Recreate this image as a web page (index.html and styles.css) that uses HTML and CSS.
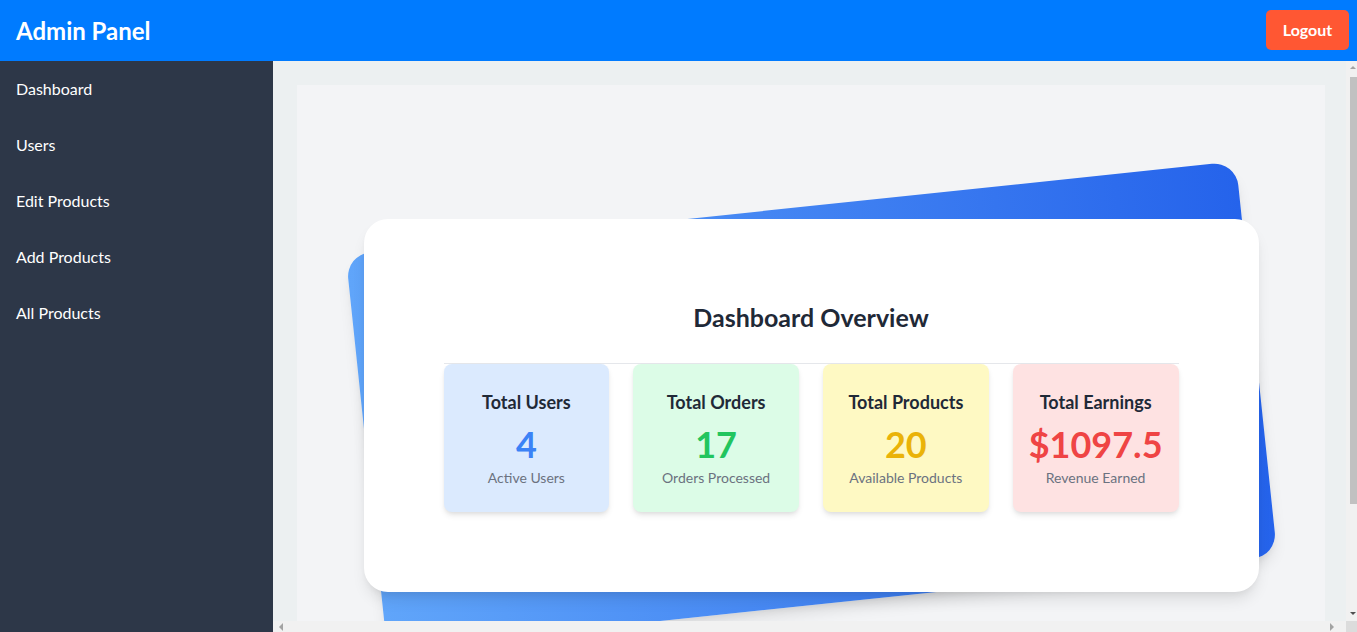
FILE: index.html
```html
<!DOCTYPE html>
<html lang="en">
<head>
<meta charset="utf-8">
<title>Admin Panel</title>
<link rel="stylesheet" href="styles.css">
</head>
<body>
<header class="topbar">
  <h1 class="brand">Admin Panel</h1>
  <button class="logout">Logout</button>
</header>
<div class="layout">
  <nav class="sidebar">
    <a class="nav-item" href="#">Dashboard</a>
    <a class="nav-item" href="#">Users</a>
    <a class="nav-item" href="#">Edit Products</a>
    <a class="nav-item" href="#">Add Products</a>
    <a class="nav-item" href="#">All Products</a>
  </nav>
  <main class="main">
    <div class="viewport">
      <div class="stage">
        <div class="card-wrap">
          <div class="card-back"></div>
          <section class="card">
            <h2 class="card-title">Dashboard Overview</h2>
            <hr class="divider">
            <div class="stats">
              <div class="stat stat-blue">
                <h3 class="stat-title">Total Users</h3>
                <p class="stat-value">4</p>
                <p class="stat-label">Active Users</p>
              </div>
              <div class="stat stat-green">
                <h3 class="stat-title">Total Orders</h3>
                <p class="stat-value">17</p>
                <p class="stat-label">Orders Processed</p>
              </div>
              <div class="stat stat-yellow">
                <h3 class="stat-title">Total Products</h3>
                <p class="stat-value">20</p>
                <p class="stat-label">Available Products</p>
              </div>
              <div class="stat stat-red">
                <h3 class="stat-title">Total Earnings</h3>
                <p class="stat-value">$1097.5</p>
                <p class="stat-label">Revenue Earned</p>
              </div>
            </div>
          </section>
        </div>
      </div>
    </div>
    <div class="vbar" aria-hidden="true">
      <span class="arrow arrow-up"></span>
      <span class="vthumb"></span>
      <span class="arrow arrow-down"></span>
    </div>
    <div class="hbar" aria-hidden="true">
      <span class="arrow arrow-left"></span>
      <span class="arrow arrow-right"></span>
    </div>
    <div class="corner" aria-hidden="true"></div>
  </main>
</div>
</body>
</html>
```

FILE: styles.css
```css
* { box-sizing: border-box; }
html, body { margin: 0; padding: 0; height: 100%; }
body {
  font-family: Lato, "Noto Sans", sans-serif;
  display: flex;
  flex-direction: column;
  height: 100vh;
  overflow: hidden;
}
.topbar {
  height: 61px;
  flex: none;
  background: #007bff;
  display: flex;
  align-items: center;
  justify-content: space-between;
  padding: 0 8px 0 16px;
}
.brand {
  margin: 0;
  color: #fff;
  font-size: 24px;
  font-weight: 700;
  line-height: 32px;
}
.logout {
  background: #ff5733;
  color: #fff;
  border: none;
  border-radius: 5px;
  font-family: inherit;
  font-size: 16px;
  font-weight: 700;
  height: 40px;
  width: 83px;
  padding: 0;
  margin-top: -2px;
}
.layout {
  flex: 1;
  display: flex;
  min-height: 0;
}
.sidebar {
  width: 273px;
  flex: none;
  background: #2d3748;
  display: flex;
  flex-direction: column;
}
.nav-item {
  color: #fff;
  text-decoration: none;
  font-size: 16px;
  line-height: 24px;
  padding: 16px;
}
.main {
  flex: 1;
  min-width: 0;
  display: grid;
  grid-template-columns: 1fr 11px;
  grid-template-rows: 1fr 11px;
}
.viewport {
  background: #ecf0f1;
  padding: 24px;
  overflow: hidden;
  min-height: 0;
}
.vbar {
  background: #f1f1f1;
  display: flex;
  flex-direction: column;
  align-items: flex-end;
  padding: 5px 0 6px;
}
.vthumb {
  width: 7px;
  height: 427px;
  background: #c1c1c1;
  margin: 8px 0 auto;
}
.hbar {
  background: #f1f1f1;
  display: flex;
  align-items: center;
  justify-content: space-between;
  padding: 0 12px 0 6px;
}
.corner { background: #dcdcdc; }
.arrow { width: 0; height: 0; display: block; }
.arrow-up {
  border-left: 3px solid transparent;
  border-right: 3px solid transparent;
  border-bottom: 3px solid #a3a3a3;
  margin-right: 1px;
}
.arrow-down {
  border-left: 3px solid transparent;
  border-right: 3px solid transparent;
  border-top: 3px solid #505050;
  margin-right: 1px;
}
.arrow-left {
  border-top: 4px solid transparent;
  border-bottom: 4px solid transparent;
  border-right: 4px solid #a3a3a3;
}
.arrow-right {
  border-top: 4px solid transparent;
  border-bottom: 4px solid transparent;
  border-left: 4px solid #a3a3a3;
}
.stage {
  width: 1028px;
  background: #f3f4f6;
  padding: 122px 0 134px;
}
.card-wrap {
  position: relative;
  width: 895px;
  margin: 0 auto;
  padding: 12px 0;
}
.card-back {
  position: absolute;
  inset: 0;
  background: linear-gradient(to right, #60a5fa, #2563eb);
  border-radius: 24px;
  transform: rotate(-6deg);
  box-shadow: 0 10px 15px -3px rgba(0,0,0,0.1), 0 4px 6px -2px rgba(0,0,0,0.05);
}
.card {
  position: relative;
  background: #fff;
  border-radius: 24px;
  padding: 80px;
  box-shadow: 0 10px 15px -3px rgba(0,0,0,0.1), 0 4px 6px -2px rgba(0,0,0,0.05);
}
.card-title {
  margin: 0 0 32px;
  text-align: center;
  font-size: 25px;
  line-height: 32px;
  font-weight: 700;
  color: #1f2937;
  position: relative;
  top: 2px;
}
.divider {
  margin: 0;
  border: none;
  border-top: 1px solid #e5e7eb;
}
.stats {
  display: grid;
  grid-template-columns: repeat(4, 1fr);
  gap: 24px;
}
.stat {
  border-radius: 8px;
  padding: 24px 8px;
  text-align: center;
  box-shadow: 0 4px 6px -1px rgba(0,0,0,0.1), 0 2px 4px -1px rgba(0,0,0,0.06);
}
.stat-title {
  margin: 0;
  font-size: 18px;
  line-height: 28px;
  font-weight: 700;
  color: #1f2937;
}
.stat-value {
  margin: 8px 0 0;
  font-size: 36px;
  line-height: 40px;
  font-weight: 700;
}
.stat-label {
  margin: 4px 0 0;
  font-size: 14px;
  line-height: 20px;
  color: #6b7280;
}
.stat-blue { background: #dbeafe; }
.stat-blue .stat-value { color: #3b82f6; }
.stat-green { background: #dcfce7; }
.stat-green .stat-value { color: #22c55e; }
.stat-yellow { background: #fef9c3; }
.stat-yellow .stat-value { color: #eab308; }
.stat-red { background: #fee2e2; }
.stat-red .stat-value { color: #ef4444; }
```
